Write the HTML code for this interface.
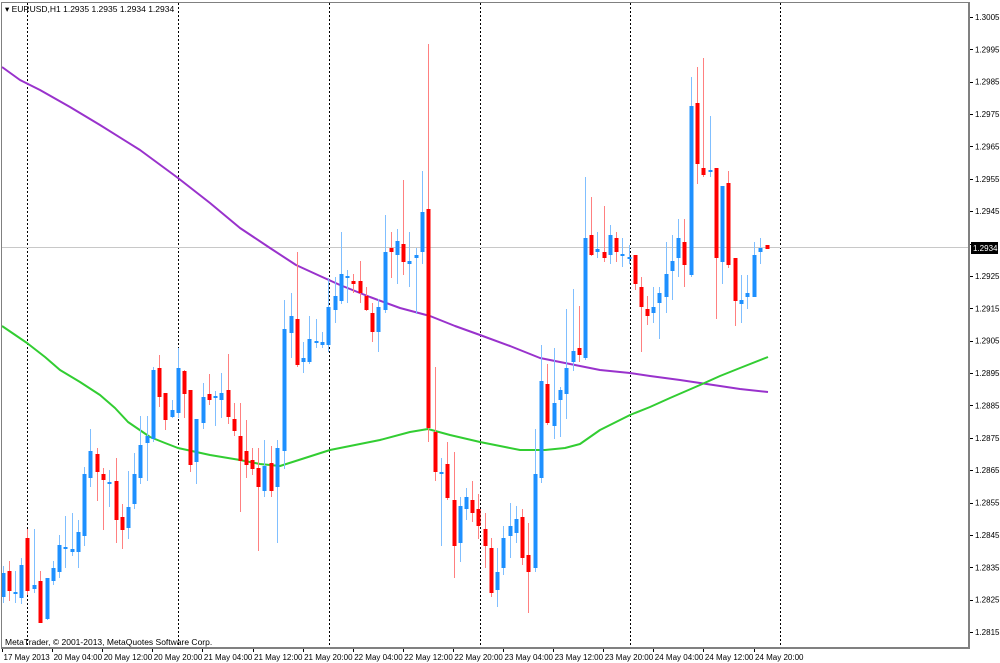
<!DOCTYPE html>
<html><head><meta charset="utf-8"><style>
html,body{margin:0;padding:0;background:#fff;}
body{width:1000px;height:663px;overflow:hidden;}
svg{display:block;font-family:"Liberation Sans",sans-serif;}
</style></head><body>
<svg id="s" width="1000" height="663" xmlns="http://www.w3.org/2000/svg">
<rect x="0" y="0" width="1000" height="663" fill="#fff"/>
<g id="grid" stroke="#000" stroke-width="1" stroke-dasharray="2,2">
<line x1="27.5" y1="3" x2="27.5" y2="648"/>
<line x1="178.5" y1="3" x2="178.5" y2="648"/>
<line x1="329.5" y1="3" x2="329.5" y2="648"/>
<line x1="480.5" y1="3" x2="480.5" y2="648"/>
<line x1="630.5" y1="3" x2="630.5" y2="648"/>
<line x1="780.5" y1="3" x2="780.5" y2="648"/>
</g>
<line x1="2" y1="247.5" x2="969" y2="247.5" stroke="#c8c8c8" stroke-width="1"/>
<polyline fill="none" stroke="#9932cc" stroke-width="2" stroke-linejoin="round" points="2,67 20,80 40,90 70,107 100,125 140,150 178,178 210,203 240,228 270,248 296,265 320,276 340,285 370,297 400,308 430,316 455,326 480,335 510,346 540,358 570,364 600,370 630,373 650,376 680,380 700,383 720,386 740,389 768,392"/>
<polyline fill="none" stroke="#32cd32" stroke-width="2" stroke-linejoin="round" points="2,326 27,343 45,357 60,370 80,382 100,395 115,408 128,422 150,437 165,443 178,448 210,455 240,460 260,464 280,466 305,458 330,450 355,445 380,440 410,432 428,429 450,435 480,442 505,447 520,450 545,450 565,448 580,444 590,437 600,430 630,415 650,407 670,398 700,385 720,376 740,368 768,357"/>
<g id="c"></g>
<rect x="1" y="2" width="1" height="647" fill="#808080"/>
<rect x="1" y="2" width="969" height="1" fill="#808080"/>
<rect x="968" y="2" width="2" height="647" fill="#808080"/>
<rect x="1" y="647" width="969" height="2" fill="#808080"/>
<g id="ax" font-size="8" fill="#000"></g>
<text x="5" y="12" font-size="8.5" fill="#000">▾ EURUSD,H1  1.2935 1.2935 1.2934 1.2934</text>
<text x="5" y="645" font-size="8.5" fill="#000">MetaTrader, © 2001-2013, MetaQuotes Software Corp.</text>
<rect x="971" y="242" width="27" height="12" fill="#000"/>
<text x="973" y="251" font-size="8" fill="#fff">1.2934</text>
</svg>
<script>
var d=[
[3,566,573,597,603,'b'],[9,561,571,591,601,'r'],[15,571,592,594,603,'b'],[21,558,565,598,604,'b'],[27,529,538,591,595,'r'],[34,529,585,589,593,'b'],[40,571,581,623,623,'r'],[47,578,578,619,620,'b'],[53,561,568,581,585,'b'],[59,535,545,572,578,'b'],[65,516,547,549,568,'b'],[72,513,549,552,556,'b'],[78,520,532,552,568,'b'],[84,467,474,536,546,'b'],[90,429,451,478,487,'b'],[97,448,454,472,501,'r'],[103,468,474,480,530,'r'],[109,470,482,484,507,'b'],[116,458,481,520,543,'r'],[122,504,517,530,549,'r'],[128,471,507,528,539,'b'],[134,453,474,504,509,'b'],[140,416,445,478,484,'b'],[147,416,436,443,481,'b'],[153,367,370,439,442,'b'],[159,355,368,397,407,'r'],[165,393,393,420,430,'r'],[172,400,410,417,418,'b'],[178,348,368,413,418,'b'],[184,370,371,394,418,'r'],[190,390,390,465,472,'r'],[196,420,419,462,484,'b'],[203,383,397,423,429,'b'],[209,374,394,400,405,'r'],[215,391,396,398,426,'b'],[221,373,393,400,418,'b'],[228,354,390,417,424,'r'],[234,403,419,431,436,'r'],[240,403,436,461,512,'r'],[246,420,451,465,478,'r'],[252,448,460,469,475,'r'],[258,448,468,487,551,'r'],[264,440,466,491,497,'b'],[271,446,463,491,497,'r'],[277,440,448,487,543,'b'],
[284,300,329,451,469,'b'],[291,293,316,333,358,'b'],[297,252,319,365,367,'r'],[303,342,358,362,373,'b'],[309,316,339,362,364,'b'],[316,319,341,343,348,'b'],[322,332,342,345,348,'b'],[328,278,307,345,352,'b'],[335,277,296,310,323,'b'],[341,232,274,301,304,'b'],[347,270,276,278,303,'b'],[353,274,281,284,293,'r'],[360,261,281,293,303,'r'],[366,287,296,310,311,'r'],[372,303,313,332,342,'r'],[378,299,307,332,352,'b'],[385,215,252,310,313,'b'],[391,232,248,252,278,'r'],[397,229,241,255,284,'b'],[403,180,244,262,275,'r'],[409,232,261,264,287,'b'],[416,248,255,258,314,'b'],[422,171,212,252,264,'b'],[428,44,209,428,442,'r'],
[435,367,432,472,481,'r'],[441,458,472,474,546,'b'],[447,442,464,498,500,'r'],[454,452,500,546,578,'r'],[460,497,506,543,562,'b'],[466,488,497,509,520,'b'],[472,481,500,513,522,'r'],[478,494,509,526,539,'r'],[485,513,529,546,568,'r'],[491,538,548,593,597,'r'],[497,548,572,590,607,'b'],[503,526,538,568,575,'b'],[510,503,526,536,558,'b'],[516,506,519,533,543,'b'],[522,509,517,558,565,'r'],[528,523,555,572,613,'r'],[535,429,474,568,572,'b'],[541,345,381,478,483,'b'],[547,364,384,423,425,'r'],[554,348,403,426,439,'b'],[560,387,390,400,437,'b'],[566,309,368,394,419,'b'],[573,289,351,362,371,'b'],[579,306,348,355,362,'r'],[585,177,238,358,360,'b'],[591,197,235,255,256,'r'],[597,232,249,252,258,'b'],[604,206,252,258,262,'r'],[610,225,235,255,264,'b'],[616,232,238,252,262,'r'],[622,238,254,256,267,'b'],[629,245,257,259,264,'b'],[635,255,255,284,290,'r'],[641,277,287,307,352,'r'],[647,296,309,316,325,'r'],[653,287,307,313,323,'b'],[659,287,293,303,339,'b'],[666,242,274,297,313,'b'],[672,235,261,271,300,'b'],[678,219,238,258,277,'b'],[684,219,242,265,287,'r'],[691,77,106,275,277,'b'],[697,67,103,164,184,'r'],[703,58,168,175,177,'r'],[710,116,170,172,177,'b'],[716,168,168,258,319,'r'],[722,186,186,262,284,'b'],[728,171,183,265,268,'r'],[735,258,258,301,326,'r'],[741,275,300,304,323,'b'],[747,275,293,297,309,'b'],[754,242,255,297,297,'b'],[760,238,248,252,264,'b'],[767,245,245,249,249,'r']];
var h='';
d.forEach(function(c){var x=c[0],wc=c[5]=='r'?'#ff8080':'#80bfff',bc=c[5]=='r'?'#ff0000':'#1e90ff';
h+='<rect x="'+x+'" y="'+c[1]+'" width="1" height="'+Math.max(1,c[4]-c[1])+'" fill="'+wc+'"/>';
h+='<rect x="'+(x-1.5)+'" y="'+c[2]+'" width="4" height="'+Math.max(2,c[3]-c[2])+'" fill="'+bc+'"/>';});
document.getElementById('c').innerHTML=h;
var a='';
var p=['1.3005','1.2995','1.2985','1.2975','1.2965','1.2955','1.2945','1.2935','1.2925','1.2915','1.2905','1.2895','1.2885','1.2875','1.2865','1.2855','1.2845','1.2835','1.2825','1.2815'];
p.forEach(function(t,i){var y=17+i*32.37;a+='<rect x="970" y="'+Math.round(y)+'" width="3" height="1" fill="#000"/>';if(i!=7)a+='<text x="975" y="'+(y+3)+'">'+t+'</text>';});
var l=['17 May 2013','20 May 04:00','20 May 12:00','20 May 20:00','21 May 04:00','21 May 12:00','21 May 20:00','22 May 04:00','22 May 12:00','22 May 20:00','23 May 04:00','23 May 12:00','23 May 20:00','24 May 04:00','24 May 12:00','24 May 20:00'];
l.forEach(function(t,i){var x=2+i*50.1;a+='<rect x="'+Math.round(x)+'" y="649" width="1" height="3" fill="#000"/><text x="'+(x+1.5)+'" y="660">'+t+'</text>';});
document.getElementById('ax').innerHTML=a;
</script>
</body></html>
